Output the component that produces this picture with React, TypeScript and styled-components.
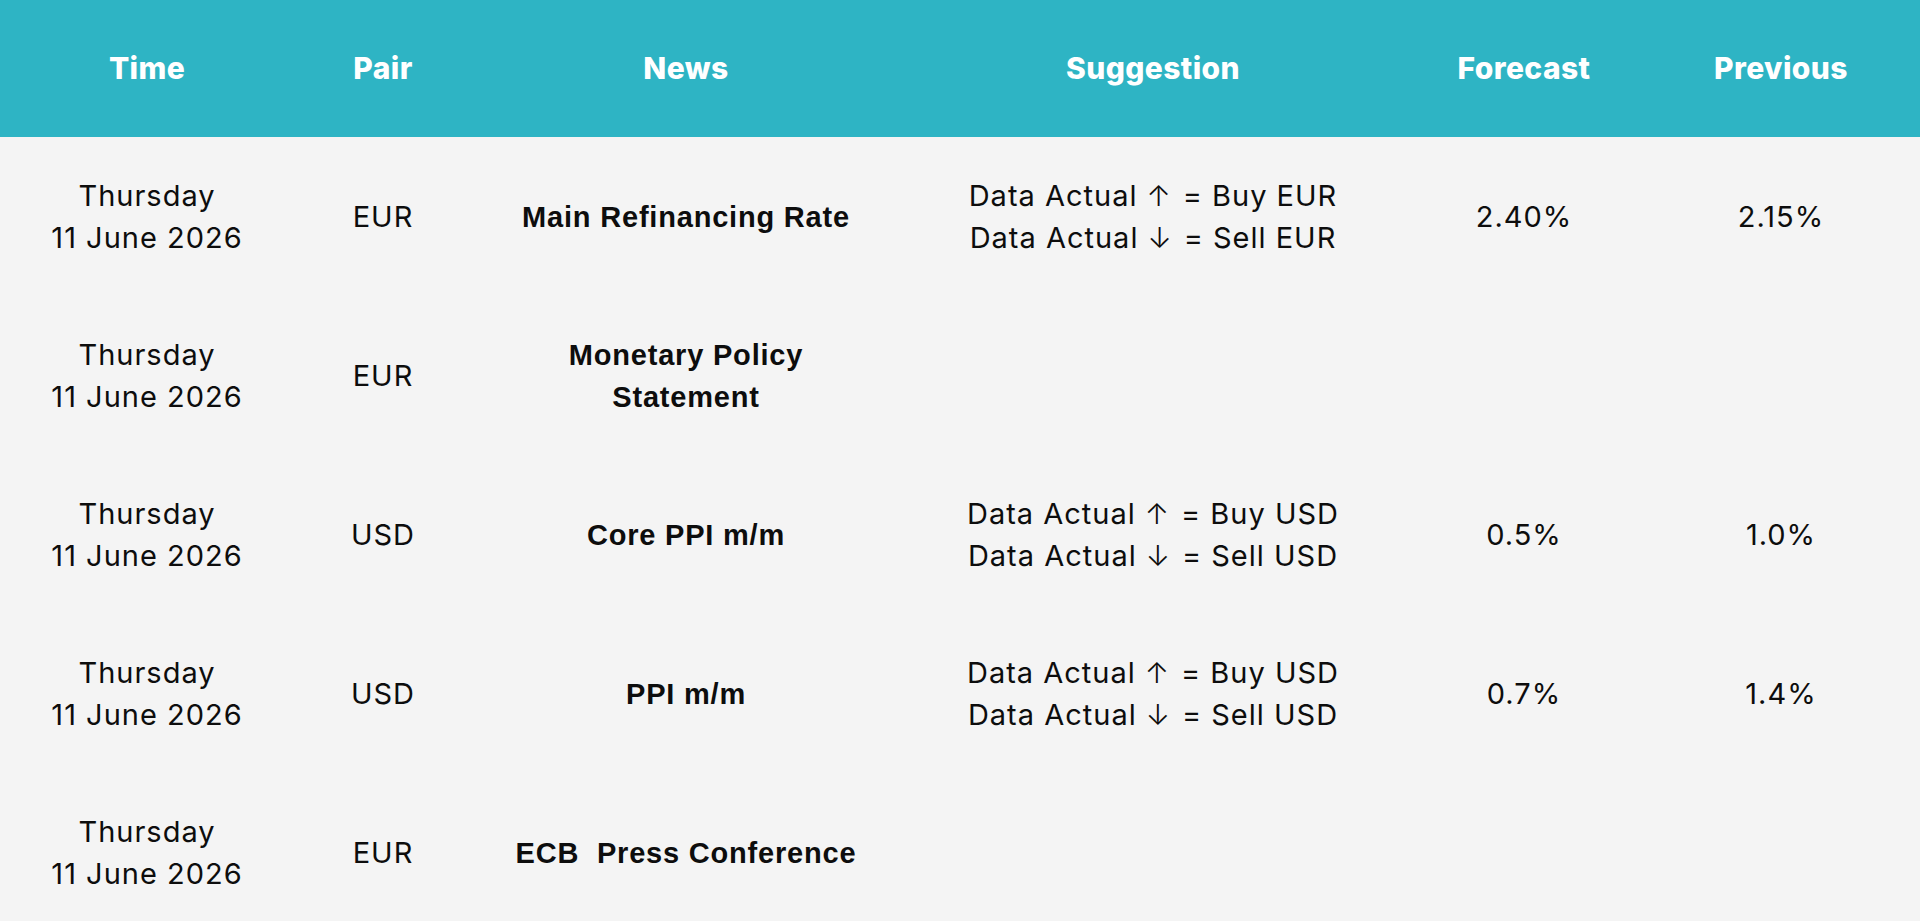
import { FC } from 'react';
import styled, { createGlobalStyle } from 'styled-components';

const GlobalStyle = createGlobalStyle`
  html, body {
    margin: 0;
    padding: 0;
    background: #f4f4f4;
    overflow: hidden;
  }
`;

const COLUMNS = '294px 178px 428px 506px 236px 278px';

const Table = styled.div`
  width: 1920px;
  font-family: Inter, 'Liberation Sans', sans-serif;
  color: #0d0d0d;
`;

const HeaderRow = styled.div`
  display: grid;
  grid-template-columns: ${COLUMNS};
  align-items: center;
  height: 137px;
  background: #2eb4c4;
`;

const HeaderCell = styled.div`
  text-align: center;
  color: #fff;
  font-size: 30px;
  font-weight: 800;
  letter-spacing: 0.4px;
  padding-bottom: 2px;
`;

const Row = styled.div`
  display: grid;
  grid-template-columns: ${COLUMNS};
  align-items: center;
  height: 159px;
`;

const Cell = styled.div<{ $bold?: boolean }>`
  text-align: center;
  font-size: 29px;
  line-height: 42px;
  font-family: ${(p) => (p.$bold ? "'Liberation Sans', Arial, sans-serif" : 'inherit')};
  font-weight: ${(p) => (p.$bold ? 700 : 400)};
  letter-spacing: ${(p) => (p.$bold ? '0.8px' : '1px')};
  white-space: pre-line;
`;

const Arrow = styled.span`
  font-weight: 300;
  margin: 0 11px 0 9px;
`;

type Item = {
  pair: string;
  news: string;
  forecast?: string;
  previous?: string;
};

const items: Item[] = [
  { pair: 'EUR', news: 'Main Refinancing Rate', forecast: '2.40%', previous: '2.15%' },
  { pair: 'EUR', news: 'Monetary Policy\nStatement' },
  { pair: 'USD', news: 'Core PPI m/m', forecast: '0.5%', previous: '1.0%' },
  { pair: 'USD', news: 'PPI m/m', forecast: '0.7%', previous: '1.4%' },
  { pair: 'EUR', news: 'ECB\u00a0 Press Conference' },
];

const headers = ['Time', 'Pair', 'News', 'Suggestion', 'Forecast', 'Previous'];

const Suggestion: FC<{ pair: string }> = ({ pair }) => (
  <Cell>
    Data Actual<Arrow>{'\u2191'}</Arrow>= Buy {pair}
    {'\n'}
    Data Actual<Arrow>{'\u2193'}</Arrow>= Sell {pair}
  </Cell>
);

const App: FC = () => {
  return (
    <>
      <GlobalStyle />
      <Table>
        <HeaderRow>
          {headers.map((h) => (
            <HeaderCell key={h}>{h}</HeaderCell>
          ))}
        </HeaderRow>
        {items.map((it, i) => (
          <Row key={i}>
            <Cell>{'Thursday\n11 June 2026'}</Cell>
            <Cell>{it.pair}</Cell>
            <Cell $bold>{it.news}</Cell>
            {it.forecast ? <Suggestion pair={it.pair} /> : <Cell />}
            <Cell>{it.forecast}</Cell>
            <Cell>{it.previous}</Cell>
          </Row>
        ))}
      </Table>
    </>
  );
};

export default App;
